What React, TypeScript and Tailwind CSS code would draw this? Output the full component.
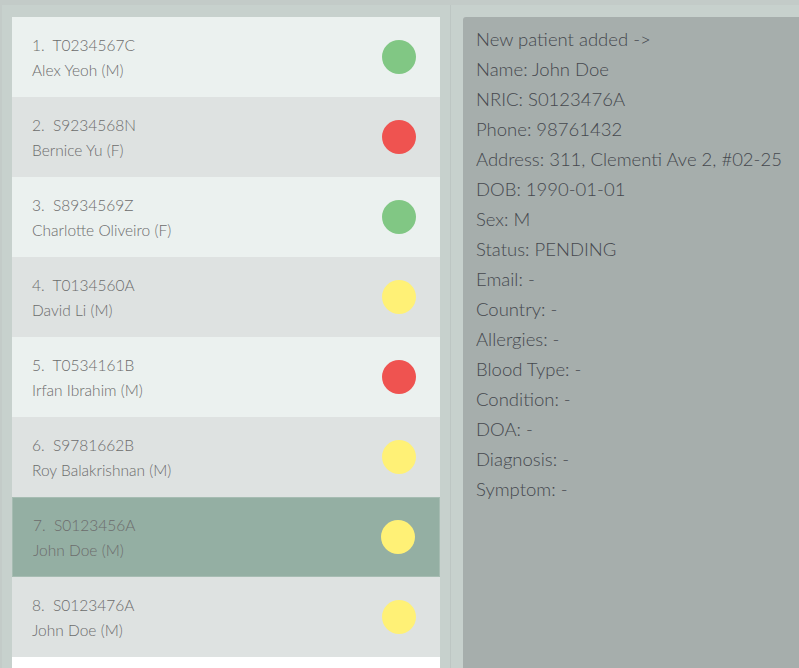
import React from "react";

type P = { id: string; name: string; color: string };

const patients: P[] = [
  { id: "T0234567C", name: "Alex Yeoh (M)", color: "bg-[#81c784]" },
  { id: "S9234568N", name: "Bernice Yu (F)", color: "bg-[#ef5350]" },
  { id: "S8934569Z", name: "Charlotte Oliveiro (F)", color: "bg-[#81c784]" },
  { id: "T0134560A", name: "David Li (M)", color: "bg-[#fff176]" },
  { id: "T0534161B", name: "Irfan Ibrahim (M)", color: "bg-[#ef5350]" },
  { id: "S9781662B", name: "Roy Balakrishnan (M)", color: "bg-[#fff176]" },
  { id: "S0123456A", name: "John Doe (M)", color: "bg-[#fff176]" },
  { id: "S0123476A", name: "John Doe (M)", color: "bg-[#fff176]" },
];

const details = [
  "New patient added ->",
  "Name: John Doe",
  "NRIC: S0123476A",
  "Phone: 98761432",
  "Address: 311, Clementi Ave 2, #02-25",
  "DOB: 1990-01-01",
  "Sex: M",
  "Status: PENDING",
  "Email: -",
  "Country: -",
  "Allergies: -",
  "Blood Type: -",
  "Condition: -",
  "DOA: -",
  "Diagnosis: -",
  "Symptom: -",
];

export default function App() {
  return (
    <div
      className="w-[799px] h-[668px] overflow-hidden bg-[#c3cbc8] pt-[5px] pl-[2px]"
      style={{ fontFamily: "'Segoe UI', Lato, 'Open Sans', sans-serif" }}
    >
      <div className="flex h-full bg-[#c7d1cd]">
        <div className="w-[449px] shrink-0 pl-[10px] pr-[10px] pt-[12px] border-r border-[#bdc6c3]">
          <div className="bg-white h-full">
            {patients.map((p, i) => {
              const selected = i === 6;
              const bg = selected
                ? "bg-[#94afa3] border border-[#a6bcb2]"
                : i % 2 === 0
                ? "bg-[#ebf1ef]"
                : "bg-[#dee2e1]";
              return (
                <div
                  key={i}
                  className={`h-[80px] flex items-center justify-between pl-[20px] pr-[24px] ${bg}`}
                >
                  <div className="flex flex-col text-[15.5px] leading-[25px] text-[#6c6c6c] font-light mt-[2px]">
                    <span>
                      {i + 1}.&nbsp;&nbsp;{p.id}
                    </span>
                    <span>{p.name}</span>
                  </div>
                  <div className={`w-[34px] h-[34px] rounded-full ${p.color}`} />
                </div>
              );
            })}
          </div>
        </div>
        <div className="flex-1 pl-[12px] pt-[12px]">
          <div className="bg-[#a6aeac] h-full rounded-tl-[3px] pl-[13px] pt-[7px]">
            {details.map((d, i) => (
              <div key={i} className="text-[18.5px] leading-[30px] text-[#45484e] font-light whitespace-nowrap">
                {d}
              </div>
            ))}
          </div>
        </div>
      </div>
    </div>
  );
}
